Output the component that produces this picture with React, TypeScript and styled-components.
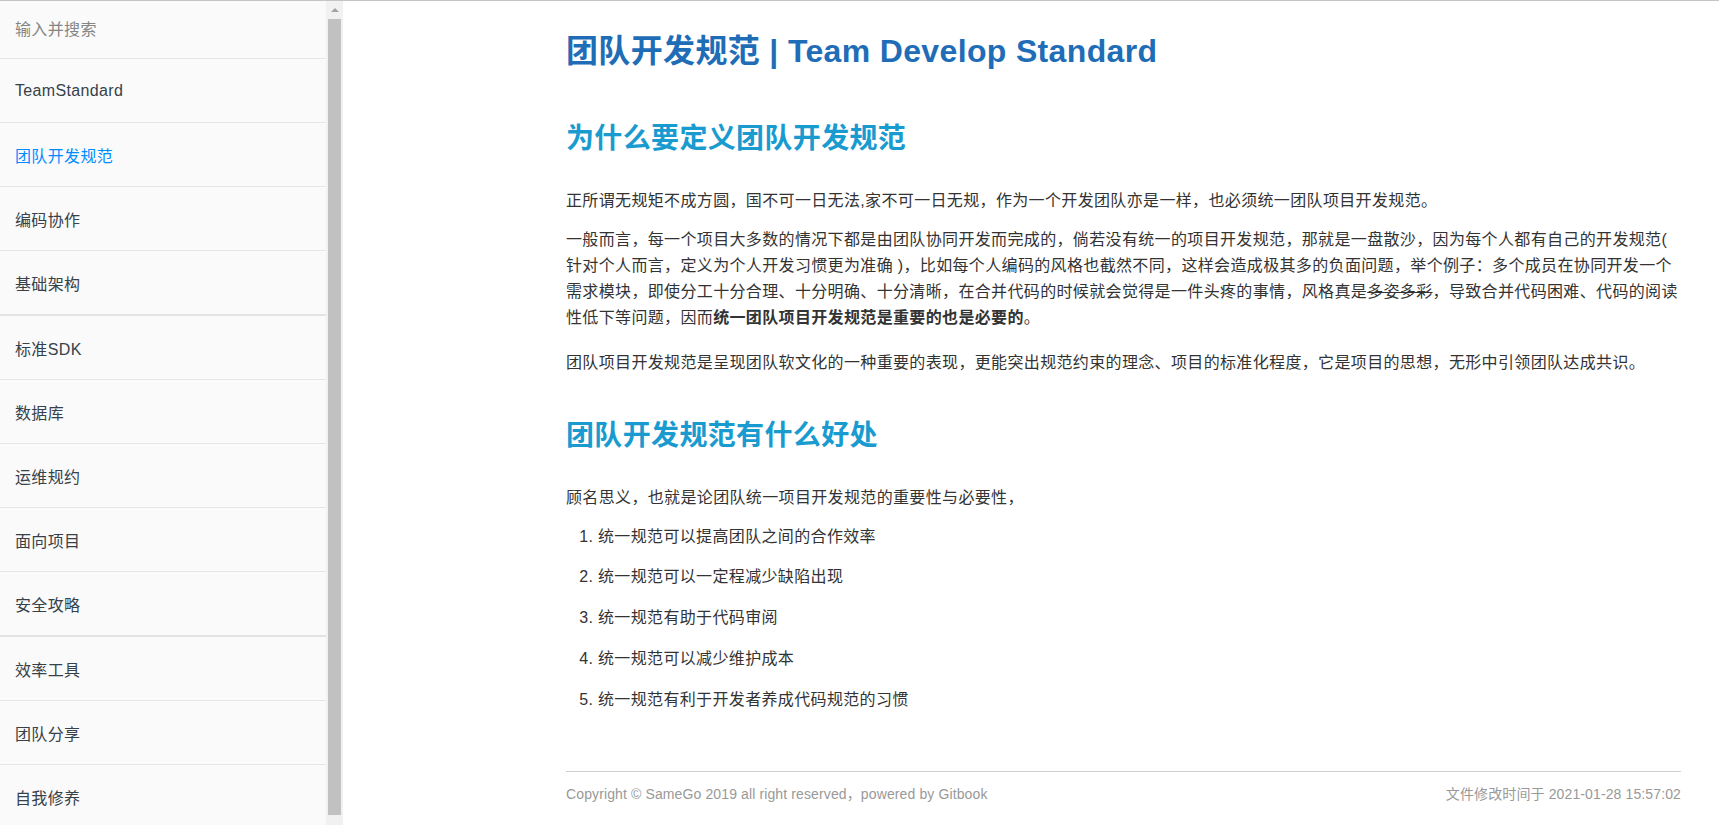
import styled, { createGlobalStyle } from "styled-components";

const GlobalStyle = createGlobalStyle`
  html, body {
    margin: 0;
    padding: 0;
    height: 100%;
    overflow: hidden;
    background: #fff;
  }
  body {
    font-family: "Liberation Sans", "Noto Sans CJK SC", sans-serif;
    color: #333;
    letter-spacing: 0.35px;
  }
  * {
    box-sizing: border-box;
  }
`;

const Shell = styled.div`
  height: 100vh;
  border-top: 1px solid #c4c4c4;
  display: flex;
  flex-direction: row;
  overflow: hidden;
`;

const Sidebar = styled.nav`
  flex: 0 0 326px;
  background: #fafafa;
  overflow: hidden;
`;

const SearchBox = styled.div`
  height: 58px;
  border-bottom: 1px solid #e6e6e6;
  display: flex;
  align-items: center;
`;

const SearchInput = styled.input`
  width: 100%;
  border: none;
  outline: none;
  background: transparent;
  padding: 0 15px;
  font-family: inherit;
  font-size: 16px;
  letter-spacing: inherit;
  color: #333;

  &::placeholder {
    color: #858585;
  }
`;

const NavList = styled.ul`
  list-style: none;
  margin: 0;
  padding: 0;
`;

const NavItem = styled.li<{ $divider?: boolean }>`
  border-bottom: ${(p) => (p.$divider ? "2px solid #e3e3e3" : "1px solid #e6e6e6")};
`;

const NavLink = styled.a<{ $active?: boolean }>`
  display: flex;
  align-items: center;
  height: 63px;
  padding: 1px 15px 0;
  font-size: 16px;
  color: ${(p) => (p.$active ? "#008cff" : "#364149")};
  text-decoration: none;
  cursor: pointer;
`;

const ScrollTrack = styled.div`
  flex: 0 0 17px;
  background: #f1f1f1;
  display: flex;
  flex-direction: column;
  align-items: center;
`;

const ScrollArrow = styled.div`
  height: 17px;
  width: 17px;
  display: flex;
  align-items: center;
  justify-content: center;

  &::before {
    content: "";
    border-left: 4px solid transparent;
    border-right: 4px solid transparent;
    border-bottom: 4px solid #a3a3a3;
  }
`;

const ScrollThumb = styled.div`
  width: 13px;
  height: 796px;
  margin-top: 1px;
  background: #c1c1c1;
`;

const Main = styled.main`
  flex: 1;
  overflow: hidden;
  padding: 31px 38px 0 223px;
`;

const Article = styled.article`
  max-width: 1115px;
`;

const Title = styled.h1`
  margin: 0 0 52px;
  font-size: 32px;
  line-height: 1.2;
  font-weight: bold;
  color: #1f6db7;
`;

const Heading = styled.h2`
  margin: 43px 0 32px;
  font-size: 28px;
  line-height: 1.2;
  font-weight: bold;
  color: #1a9bcf;
`;

const Para = styled.p<{ $extra?: number }>`
  margin: 0 0 ${(p) => 13 + (p.$extra ?? 0)}px;
  font-size: 16px;
  line-height: 26px;
  color: #333;

  strong {
    font-weight: bold;
  }

  del {
    text-decoration: line-through;
  }
`;

const OrderedList = styled.ol`
  margin: 13px 0 0;
  padding-left: 32px;
`;

const ListItem = styled.li`
  margin: 0 0 14.8px;
  font-size: 16px;
  line-height: 26px;
  color: #333;
`;

const Footer = styled.footer`
  margin-top: 58px;
  border-top: 1px solid #cfcfcf;
  padding-top: 12px;
  display: flex;
  justify-content: space-between;
  font-size: 14px;
  line-height: 20px;
  letter-spacing: 0.12px;
  color: #999;
`;

const navItems = [
  { label: "TeamStandard" },
  { label: "团队开发规范", active: true },
  { label: "编码协作" },
  { label: "基础架构", divider: true },
  { label: "标准SDK" },
  { label: "数据库" },
  { label: "运维规约" },
  { label: "面向项目" },
  { label: "安全攻略", divider: true },
  { label: "效率工具" },
  { label: "团队分享" },
  { label: "自我修养" },
];

const benefits = [
  "统一规范可以提高团队之间的合作效率",
  "统一规范可以一定程减少缺陷出现",
  "统一规范有助于代码审阅",
  "统一规范可以减少维护成本",
  "统一规范有利于开发者养成代码规范的习惯",
];

export default function App() {
  return (
    <>
      <GlobalStyle />
      <Shell>
        <Sidebar>
          <SearchBox>
            <SearchInput type="text" placeholder="输入并搜索" />
          </SearchBox>
          <NavList>
            {navItems.map((item) => (
              <NavItem key={item.label} $divider={item.divider}>
                <NavLink $active={item.active}>{item.label}</NavLink>
              </NavItem>
            ))}
          </NavList>
        </Sidebar>

        <ScrollTrack>
          <ScrollArrow />
          <ScrollThumb />
        </ScrollTrack>

        <Main>
          <Article>
            <Title>团队开发规范 | Team Develop Standard</Title>

            <Heading>为什么要定义团队开发规范</Heading>
            <Para>
              正所谓无规矩不成方圆，国不可一日无法,家不可一日无规，作为一个开发团队亦是一样，也必须统一团队项目开发规范。
            </Para>
            <Para $extra={6}>
              一般而言，每一个项目大多数的情况下都是由团队协同开发而完成的，倘若没有统一的项目开发规范，那就是一盘散沙，因为每个人都有自己的开发规范({" "}
              针对个人而言，定义为个人开发习惯更为准确
              )，比如每个人编码的风格也截然不同，这样会造成极其多的负面问题，举个例子：多个成员在协同开发一个需求模块，即使分工十分合理、十分明确、十分清晰，在合并代码的时候就会觉得是一件头疼的事情，风格真是
              <del>多姿多彩</del>，导致合并代码困难、代码的阅读性低下等问题，因而
              <strong>统一团队项目开发规范是重要的也是必要的</strong>。
            </Para>
            <Para>
              团队项目开发规范是呈现团队软文化的一种重要的表现，更能突出规范约束的理念、项目的标准化程度，它是项目的思想，无形中引领团队达成共识。
            </Para>

            <Heading>团队开发规范有什么好处</Heading>
            <Para>顾名思义，也就是论团队统一项目开发规范的重要性与必要性，</Para>
            <OrderedList>
              {benefits.map((text) => (
                <ListItem key={text}>{text}</ListItem>
              ))}
            </OrderedList>

            <Footer>
              <span>Copyright © SameGo 2019 all right reserved，powered by Gitbook</span>
              <span>文件修改时间于 2021-01-28 15:57:02</span>
            </Footer>
          </Article>
        </Main>
      </Shell>
    </>
  );
}
